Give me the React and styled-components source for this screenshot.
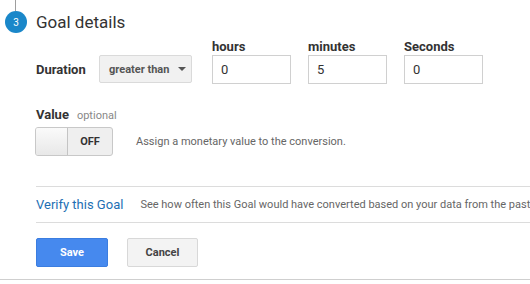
import React from "react";
import styled, { createGlobalStyle } from "styled-components";

const GlobalStyle = createGlobalStyle`
  body {
    margin: 0;
    background: #fff;
    font-family: Roboto, "Liberation Sans", Arial, sans-serif;
    color: #333;
  }
`;

const App = () => {
  return (
    <>
      <GlobalStyle />
      <Page>
        <Header>
          <Marker>
            <Connector />
            <StepBadge>3</StepBadge>
          </Marker>
          <Title>Goal details</Title>
        </Header>

        <Section>
          <DurationRow>
            <DurationLabel>Duration</DurationLabel>
            <Select>
              greater than
              <Caret />
            </Select>
            <Field>
              <FieldLabel>hours</FieldLabel>
              <Input defaultValue="0" />
            </Field>
            <Field>
              <FieldLabel>minutes</FieldLabel>
              <Input defaultValue="5" />
            </Field>
            <Field>
              <FieldLabel>Seconds</FieldLabel>
              <Input defaultValue="0" />
            </Field>
          </DurationRow>

          <ValueBlock>
            <ValueHeading>
              <RowLabel>Value</RowLabel>
              <Optional>optional</Optional>
            </ValueHeading>
            <ToggleRow>
              <Toggle>
                <Knob />
                <ToggleText>OFF</ToggleText>
              </Toggle>
              <Hint>Assign a monetary value to the conversion.</Hint>
            </ToggleRow>
          </ValueBlock>

          <VerifyRow>
            <VerifyLink>Verify this Goal</VerifyLink>
            <Hint>See how often this Goal would have converted based on your data from the past 7 days.</Hint>
          </VerifyRow>

          <Actions>
            <Button primary>Save</Button>
            <Button>Cancel</Button>
          </Actions>
        </Section>
        <BottomRule />
      </Page>
    </>
  );
};

const Page = styled.div`
  width: 530px;
  height: 284px;
  overflow: hidden;
`;

const Header = styled.div`
  display: flex;
  align-items: flex-start;
`;

const Marker = styled.div`
  width: 36px;
  padding-left: 5px;
  box-sizing: border-box;
  display: flex;
  flex-direction: column;
`;

const Connector = styled.div`
  width: 1px;
  height: 11px;
  margin-left: 10px;
  background: #9e9e9e;
`;

const StepBadge = styled.div`
  width: 22px;
  height: 22px;
  border-radius: 50%;
  background: #1a87c9;
  color: #fff;
  font-size: 10px;
  display: flex;
  align-items: center;
  justify-content: center;
`;

const Title = styled.h2`
  margin: 11px 0 0;
  font-size: 17px;
  font-weight: 400;
  color: #333;
  line-height: 22px;
`;

const Section = styled.div`
  padding-left: 36px;
`;

const DurationRow = styled.div`
  display: flex;
  align-items: flex-end;
  margin-top: 6px;
`;

const RowLabel = styled.span`
  font-size: 13px;
  font-weight: 700;
  color: #333;
`;

const DurationLabel = styled(RowLabel)`
  width: 63px;
  line-height: 29px;
  flex-shrink: 0;
`;

const Select = styled.div`
  box-sizing: border-box;
  width: 93px;
  height: 28px;
  margin: 0 20px 1px 0;
  padding: 0 0 0 9px;
  display: flex;
  align-items: center;
  font-size: 11px;
  font-weight: 700;
  color: #555;
  background: #f1f1f1;
  border: 1px solid #dadada;
  border-radius: 2px;
`;

const Caret = styled.span`
  margin-left: 9px;
  width: 0;
  height: 0;
  border-left: 4px solid transparent;
  border-right: 4px solid transparent;
  border-top: 4px solid #555;
`;

const Field = styled.div`
  display: flex;
  flex-direction: column;
  width: 94px;
  margin-right: 2px;
`;

const FieldLabel = styled.label`
  font-size: 13px;
  font-weight: 700;
  color: #333;
  line-height: 16px;
`;

const Input = styled.input`
  box-sizing: border-box;
  width: 79px;
  height: 29px;
  padding: 0 8px;
  border: 1px solid #d0d0d0;
  font-family: Roboto, "Liberation Sans", Arial, sans-serif;
  font-size: 13px;
  color: #333;
  outline: none;
`;

const ValueBlock = styled.div`
  margin-top: 23px;
`;

const ValueHeading = styled.div`
  display: flex;
  align-items: baseline;
  gap: 8px;
  line-height: 16px;
`;

const Optional = styled.span`
  font-size: 11px;
  color: #888;
`;

const ToggleRow = styled.div`
  display: flex;
  align-items: center;
  margin-top: 3px;
  gap: 23px;
`;

const Toggle = styled.div`
  box-sizing: border-box;
  width: 78px;
  height: 29px;
  margin-left: -1px;
  display: flex;
  border: 1px solid #c8c8c8;
  border-radius: 3px;
  overflow: hidden;
  background: #efefef;
`;

const Knob = styled.div`
  width: 31px;
  border-right: 1px solid #c4c4c4;
  background: linear-gradient(#fafafa, #e8e8e8);
`;

const ToggleText = styled.div`
  flex: 1;
  display: flex;
  align-items: center;
  justify-content: center;
  font-size: 11px;
  font-weight: 700;
  color: #333;
`;

const Hint = styled.span`
  font-size: 11px;
  color: #666;
  white-space: nowrap;
`;

const VerifyRow = styled.div`
  display: flex;
  align-items: center;
  gap: 17px;
  height: 35px;
  margin-top: 30px;
  border-top: 1px solid #dcdcdc;
  border-bottom: 1px solid #dcdcdc;
  overflow: hidden;
`;

const VerifyLink = styled.a`
  font-size: 13px;
  color: #1d6fb4;
  white-space: nowrap;
  cursor: pointer;
`;

const Actions = styled.div`
  display: flex;
  gap: 19px;
  margin-top: 15px;
`;

const Button = styled.button`
  box-sizing: border-box;
  height: 29px;
  width: ${(p) => (p.primary ? "72px" : "71px")};
  font-family: Roboto, "Liberation Sans", Arial, sans-serif;
  font-size: 11px;
  font-weight: 700;
  border-radius: 2px;
  cursor: pointer;
  color: ${(p) => (p.primary ? "#fff" : "#444")};
  background: ${(p) => (p.primary ? "#4689ee" : "#f3f3f3")};
  border: 1px solid ${(p) => (p.primary ? "#3b7de0" : "#d8d8d8")};
`;

const BottomRule = styled.div`
  height: 1px;
  margin-top: 12px;
  background: #cfcfcf;
`;

export default App;
